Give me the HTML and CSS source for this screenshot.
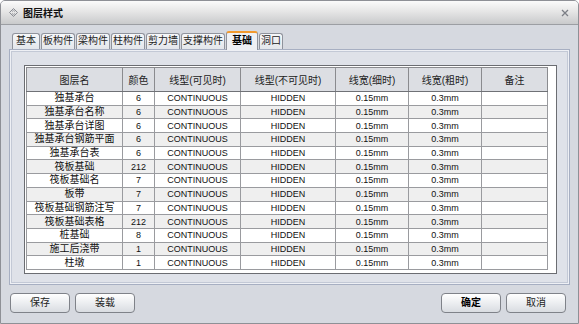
FILE: index.html
```html
<!DOCTYPE html>
<html lang="zh-CN">
<head>
    <meta charset="UTF-8">
    <title>图层样式</title>
    <link rel="stylesheet" href="styles.css">
</head>
<body>
    <div class="window">
        <div class="titlebar">
            <svg class="title-icon" width="9" height="9" viewBox="0 0 9 9">
                <path d="M4.5 0.5 L8.5 4.5 L4.5 8.5 L0.5 4.5 Z" fill="none" stroke="#8a8d94" stroke-width="1"/>
                <path d="M3 3.6 L4.5 2.3 L6 3.6 M3 5.4 L4.5 6.7 L6 5.4" fill="none" stroke="#8a8d94" stroke-width="0.8"/>
            </svg>
            <span class="title">图层样式</span>
            <svg class="close" width="8" height="8" viewBox="0 0 8 8">
                <path d="M1 1 L7 7 M7 1 L1 7" stroke="#7c7f86" stroke-width="1.3"/>
            </svg>
        </div>

        <div class="content">
            <div class="tabs">
                <div class="tab wide">基本</div>
                <div class="tab">板构件</div>
                <div class="tab">梁构件</div>
                <div class="tab">柱构件</div>
                <div class="tab">剪力墙</div>
                <div class="tab">支撑构件</div>
                <div class="tab active">基础</div>
                <div class="tab">洞口</div>
            </div>

            <div class="panel">
                <div class="grid-frame">
                    <table class="grid">
                        <thead>
                            <tr>
                                <th class="c-name">图层名</th>
                                <th class="c-color">颜色</th>
                                <th class="c-vis">线型(可见时)</th>
                                <th class="c-hid">线型(不可见时)</th>
                                <th class="c-thin">线宽(细时)</th>
                                <th class="c-bold">线宽(粗时)</th>
                                <th class="c-note">备注</th>
                            </tr>
                        </thead>
                        <tbody id="rows"></tbody>
                    </table>
                </div>
            </div>

            <div class="footer">
                <div class="btn">保存</div>
                <div class="btn">装载</div>
                <div class="spacer"></div>
                <div class="btn default">确定</div>
                <div class="btn">取消</div>
            </div>
        </div>
    </div>

    <script>
        // 图层数据
        const layers = [
            ['独基承台', 6],
            ['独基承台名称', 6],
            ['独基承台详图', 6],
            ['独基承台钢筋平面', 6],
            ['独基承台表', 6],
            ['筏板基础', 212],
            ['筏板基础名', 7],
            ['板带', 7],
            ['筏板基础钢筋注写', 7],
            ['筏板基础表格', 212],
            ['桩基础', 8],
            ['施工后浇带', 1],
            ['柱墩', 1]
        ];

        const tbody = document.getElementById('rows');
        layers.forEach(([name, color]) => {
            const tr = document.createElement('tr');
            tr.innerHTML =
                `<td>${name}</td>` +
                `<td class="en">${color}</td>` +
                `<td class="en">CONTINUOUS</td>` +
                `<td class="en">HIDDEN</td>` +
                `<td class="en">0.15mm</td>` +
                `<td class="en">0.3mm</td>` +
                `<td></td>`;
            tbody.appendChild(tr);
        });
    </script>
</body>
</html>
```

FILE: styles.css
```css
body {
    margin: 0;
    font-family: "Liberation Sans", "Noto Sans CJK SC", sans-serif;
    font-size: 10px;
    color: #111;
    background: #ffffff;
}

.window {
    width: 579px;
    height: 324px;
    box-sizing: border-box;
    border: 1px solid #8e9096;
    border-radius: 5px 5px 0 0;
    background: #d6d9e0;
    display: flex;
    flex-direction: column;
    overflow: hidden;
}

.titlebar {
    height: 23px;
    flex: 0 0 auto;
    display: flex;
    align-items: center;
    padding: 0 9px 0 8px;
    background: linear-gradient(to bottom, #fbfbfb, #e6e6e6 45%, #c9cacc);
    border-bottom: 1px solid #9c9ea3;
}

.title-icon {
    margin-right: 5px;
}

.title {
    font-weight: bold;
    font-size: 10px;
    flex: 1;
}

.content {
    flex: 1;
    display: flex;
    flex-direction: column;
    padding: 7px 7px 0 7px;
}

/* 标签页 */
.tabs {
    display: flex;
    align-items: flex-end;
    gap: 1px;
    padding-left: 4px;
    height: 17px;
    position: relative;
    z-index: 1;
}

.tab {
    height: 16px;
    box-sizing: border-box;
    padding: 0 1px;
    line-height: 14px;
    text-align: center;
    border: 1px solid #8f939c;
    border-bottom: none;
    border-radius: 3px 3px 0 0;
    background: linear-gradient(to bottom, #f6f7f9, #e3e6eb);
    color: #222;
}

.tab.wide {
    min-width: 28px;
}

.tab.active {
    height: 19px;
    margin-bottom: -1px;
    padding: 0 5px;
    border-top: 2px solid #f29a2e;
    background: #eef0f4;
    font-weight: bold;
    line-height: 16px;
    color: #000;
}

.panel {
    height: 236px;
    box-sizing: border-box;
    margin: 0 1px;
    padding: 15px 12px 10px 14px;
    border: 1px solid #a7afc2;
    box-shadow: inset 0 0 0 1px #eef0f5, inset 0 0 0 2px #c3c9d6;
    background: #dfe2e9;
}

.grid-frame {
    height: 100%;
    box-sizing: border-box;
    border: 1px solid #6b6d72;
    background: #ffffff;
    padding: 1px 0 0 1px;
}

.grid {
    border-collapse: collapse;
    table-layout: fixed;
    width: 515px;
}

.grid th,
.grid td {
    border: 1px solid #8a8b8f;
    text-align: center;
    padding: 0;
    white-space: nowrap;
    overflow: hidden;
}

.grid th {
    height: 23px;
    background: #dcdee3;
    font-weight: normal;
    color: #222;
    border-bottom-color: #6f7176;
}

.grid td {
    height: 12.7px;
    line-height: 12px;
    border-color: #9a9b9f;
}

.grid tbody tr:nth-child(even) td {
    background: #efefef;
}

.grid td.en {
    font-size: 9px;
}

.c-name  { width: 95px; }
.c-color { width: 31px; }
.c-vis   { width: 85px; }
.c-hid   { width: 94px; }
.c-thin  { width: 72px; }
.c-bold  { width: 72px; }
.c-note  { width: 65px; }

/* 底部按钮 */
.footer {
    display: flex;
    gap: 5px;
    margin-top: 8px;
    padding: 0 5px 0 2px;
}

.spacer {
    flex: 1;
}

.btn {
    width: 58px;
    height: 18px;
    line-height: 18px;
    text-align: center;
    border: 1px solid #7f8289;
    border-radius: 4px;
    background: linear-gradient(to bottom, #ffffff, #eceef1 50%, #d9dce1);
    color: #222;
}

.btn.default {
    font-weight: bold;
    color: #000;
}
```
